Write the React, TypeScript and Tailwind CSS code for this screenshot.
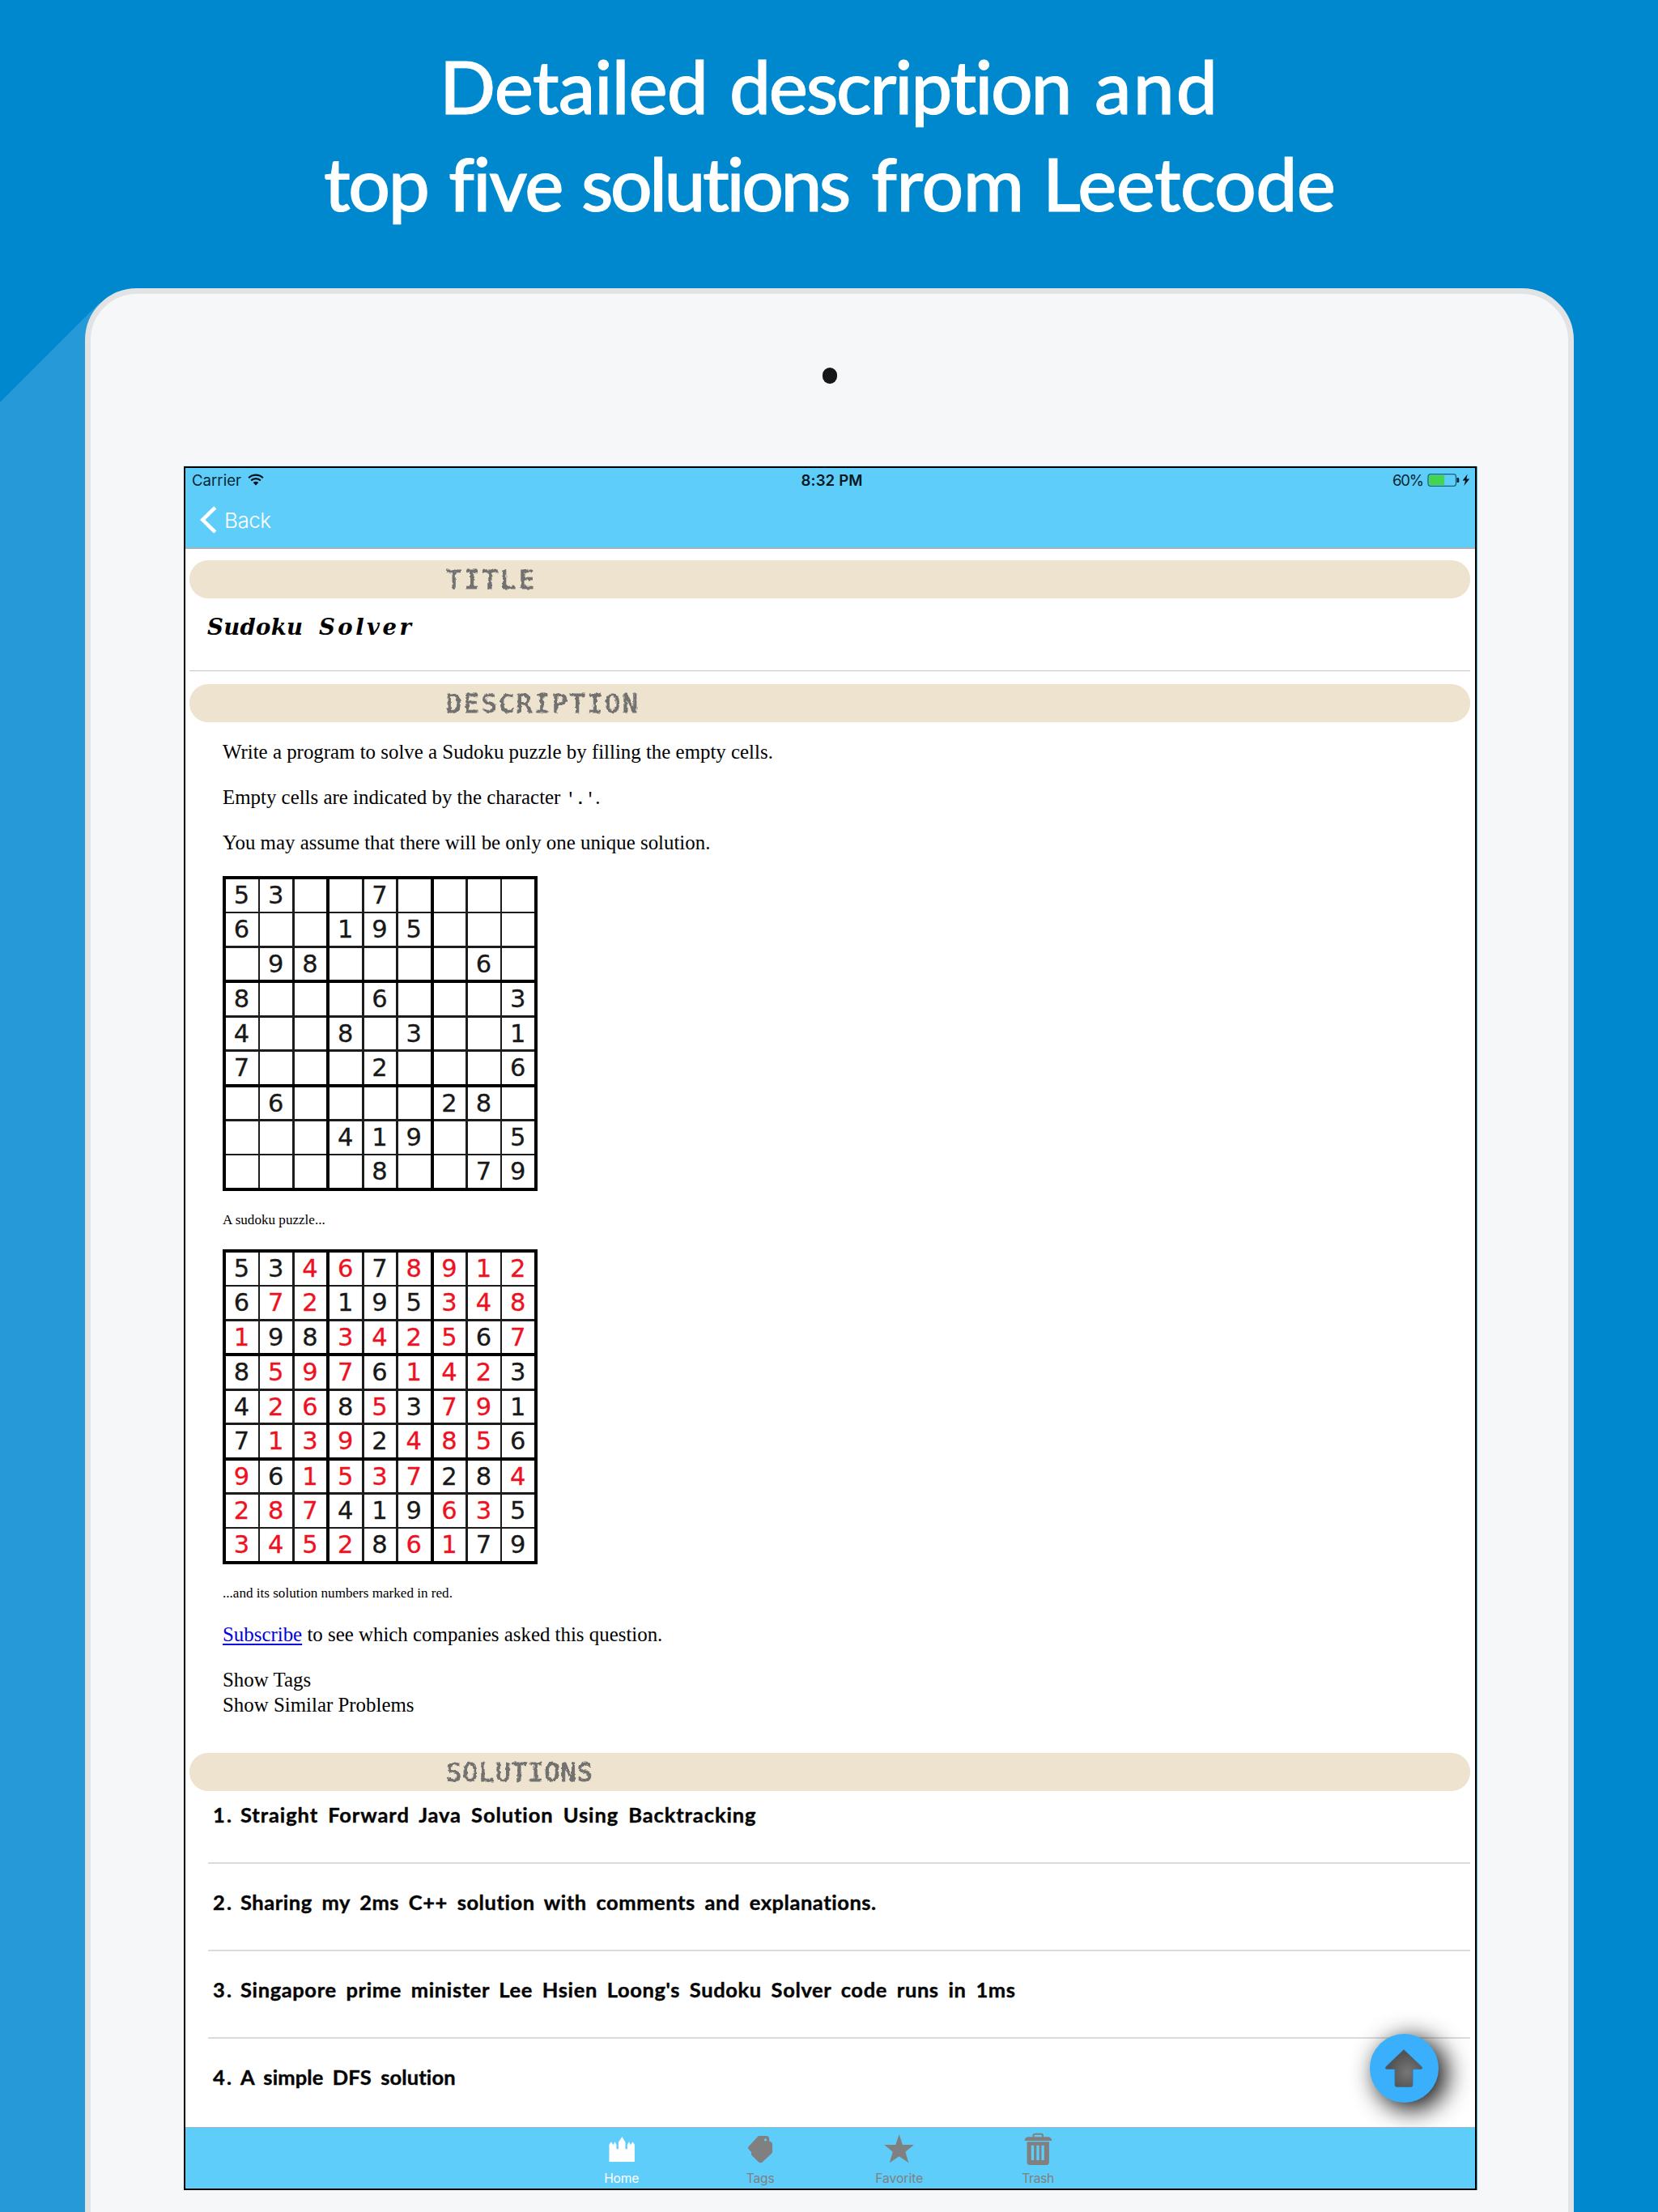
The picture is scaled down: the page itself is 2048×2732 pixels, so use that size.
import { useLayoutEffect, useRef, useState } from 'react';
import type { ReactNode } from 'react';

/* Text tracked so that it fills a given width. */
function Fit({ width, className = '', children }: { width: number; className?: string; children: string }) {
  const ref = useRef<HTMLSpanElement>(null);
  const [spacing, setSpacing] = useState(0);
  useLayoutEffect(() => {
    const el = ref.current;
    if (!el) return;
    const natural = el.getBoundingClientRect().width - spacing * children.length;
    setSpacing((width - natural) / Math.max(1, children.length - 1));
  }, [width, children]);
  return (
    <span className={`block shrink-0 whitespace-nowrap ${className}`} style={{ width }}>
      <span ref={ref} className="inline-block" style={{ letterSpacing: spacing }}>
        {children}
      </span>
    </span>
  );
}

const puzzle = [
  '53..7....',
  '6..195...',
  '.98....6.',
  '8...6...3',
  '4..8.3..1',
  '7...2...6',
  '.6....28.',
  '...419..5',
  '....8..79',
];

const solved = [
  '534678912',
  '672195348',
  '198342567',
  '859761423',
  '426853791',
  '713924856',
  '961537284',
  '287419635',
  '345286179',
];

const three = [0, 1, 2];

function Sudoku({ rows }: { rows: string[] }) {
  return (
    <div className="grid h-[389px] w-[389px] grid-cols-3 grid-rows-3 gap-1 bg-black p-1">
      {three.map((br) =>
        three.map((bc) => (
          <div key={`${br}${bc}`} className="grid grid-cols-3 grid-rows-3 gap-[2.6px] bg-[#1c1c1c]">
            {three.map((r) =>
              three.map((c) => {
                const row = br * 3 + r;
                const col = bc * 3 + c;
                const value = rows[row][col];
                const given = puzzle[row][col] !== '.';
                return (
                  <div
                    key={`${r}${c}`}
                    className={`flex items-center justify-center overflow-hidden bg-white pt-[1px] pr-[1px] font-['DejaVu_Sans'] text-[30.5px] leading-none [-webkit-text-stroke:0.3px_currentColor] ${
                      given ? 'text-[#181818]' : 'text-[#ee1122]'
                    }`}
                  >
                    {value === '.' ? '' : value}
                  </div>
                );
              }),
            )}
          </div>
        )),
      )}
    </div>
  );
}

function SectionBar({ label, width }: { label: string; width: number }) {
  return (
    <div className="mr-[6px] ml-[5px] flex h-[47px] shrink-0 items-center rounded-[23px] bg-[#ede3cf] pl-[317px]">
      <Fit
        width={width}
        className="pt-[2px] font-['DejaVu_Sans_Mono',monospace] text-[32px] leading-[45px] text-[#72716f] [filter:url(#chalk)] [-webkit-text-stroke:1px_currentColor]"
      >
        {label}
      </Fit>
    </div>
  );
}

const solutions = [
  { n: '1.', text: 'Straight Forward Java Solution Using Backtracking', w: 637 },
  { n: '2.', text: 'Sharing my 2ms C++ solution with comments and explanations.', w: 786 },
  { n: '3.', text: "Singapore prime minister Lee Hsien Loong's Sudoku Solver code runs in 1ms", w: 957 },
  { n: '4.', text: 'A simple DFS solution', w: 266 },
];

function Tab({ label, width, color, viewBox, children }: { label: string; width: number; color: string; viewBox: string; children: ReactNode }) {
  return (
    <div className={`flex w-[171.5px] flex-col items-center pt-[6px] ${color}`}>
      <svg className="h-10 w-10" viewBox={viewBox} preserveAspectRatio="none" fill="currentColor">
        {children}
      </svg>
      <Fit width={width} className="mt-[7px] text-[15.6px] leading-5">
        {label}
      </Fit>
    </div>
  );
}

export default function App() {
  return (
    <div className="relative flex h-[2732px] w-[2048px] flex-col overflow-hidden bg-[#0088ce]">
      <svg className="absolute h-0 w-0">
        <filter id="chalk">
          <feTurbulence type="fractalNoise" baseFrequency="0.22" numOctaves="2" seed="4" />
          <feDisplacementMap in="SourceGraphic" scale="4" xChannelSelector="R" yChannelSelector="G" />
        </filter>
      </svg>
      <div className="absolute top-[374px] left-0 h-[2358px] w-[123px] bg-[#269ad8] [clip-path:polygon(0_123px,123px_0,123px_100%,0_100%)]" />

      <h1 className="h-[356px] shrink-0 pt-[46px] font-['Lato',sans-serif] text-[91px] leading-[120px] font-medium text-white [-webkit-text-stroke:1px_white]">
        <span className="flex gap-[26px] pl-[543px]">
          <Fit width={332}>Detailed</Fit>
          <Fit width={425}>description</Fit>
          <Fit width={152}>and</Fit>
        </span>
        <span className="flex gap-[23px] pl-[400px]">
          <Fit width={131}>top</Fit>
          <Fit width={141}>five</Fit>
          <Fit width={335}>solutions</Fit>
          <Fit width={189}>from</Fit>
          <Fit width={362}>Leetcode</Fit>
        </span>
      </h1>

      <div className="relative ml-[105px] flex h-[2500px] w-[1839px] shrink-0 flex-col rounded-[64px] border-[7px] border-[#e1e3e5] bg-[#f5f7f9]">
        <div className="mt-[91px] ml-[904px] h-5 w-[18px] rounded-full bg-[#17171b]" />

        <div className="relative mt-[102px] ml-[115px] flex h-[2129px] w-[1597px] flex-col overflow-hidden border-2 border-black bg-white font-['Inter',sans-serif] shadow-[1px_0_0_#4aa6dc,0_-1px_0_#bfe8f0]">
          <div className="h-[100px] shrink-0 border-b-2 border-[#a3b4bb] bg-[#5fcdfa]">
            <div className="grid h-[30px] grid-cols-3 items-center text-[18.6px] leading-[30px] text-[#062733]">
              <div className="flex items-center gap-2 pl-[8px]">
                <Fit width={61}>Carrier</Fit>
                <svg className="-mt-[2px] h-[15px] w-5" viewBox="0 0 20 15" fill="none" stroke="#04121a" strokeWidth="2.3">
                  <path d="M1.2 5.2 A12.6 12.6 0 0 1 18.8 5.2" />
                  <path d="M4.2 8.4 A8.3 8.3 0 0 1 15.8 8.4" />
                  <path d="M6.7 11 A4.7 4.7 0 0 1 13.3 11 L10 14.6 Z" fill="#04121a" stroke="none" />
                </svg>
              </div>
              <div className="flex justify-center pl-[4px] font-semibold text-[#031820]">
                <Fit width={76}>8:32 PM</Fit>
              </div>
              <div className="flex items-center justify-end pr-[6px]">
                <Fit width={39}>60%</Fit>
                <svg className="ml-[4px] h-4 w-[53px]" viewBox="0 0 53 16">
                  <rect x="1" y=".7" width="34.5" height="14.6" rx="3" fill="none" stroke="#1b6478" strokeWidth="1.3" />
                  <rect x="2.2" y="1.8" width="19" height="12.4" rx="1.4" fill="#43d551" />
                  <path d="M36.5 5 h1.2 q1.6 0 1.6 1.6 v2.8 q0 1.6 -1.6 1.6 h-1.2z" fill="#04222c" />
                  <path d="M49.6 .8 L43.6 8.6 H47 L45.4 15 L52.2 6.6 H48.4Z" fill="#04121a" />
                </svg>
              </div>
            </div>
            <div className="flex h-[68px] items-center pl-[18px] text-white">
              <svg className="h-[34px] w-[22px]" viewBox="0 0 22 34" fill="none" stroke="white" strokeWidth="4.6">
                <path d="M18.8 1.8 L3.2 17 L18.8 32.2" />
              </svg>
              <Fit width={58} className="ml-[8px] pt-[2px] text-[26px] leading-[66px] font-light">
                Back
              </Fit>
            </div>
          </div>

          <div className="flex h-[1949px] shrink-0 flex-col overflow-hidden pt-[14px]">
            <SectionBar label="TITLE" width={109} />
            <h2 className="mb-[2px] flex h-[71px] shrink-0 items-center gap-[20px] pl-[27px] font-['DejaVu_Serif',serif] text-[27.5px] leading-none font-bold text-black italic">
              <Fit width={118}>Sudoku</Fit>
              <Fit width={114}>Solver</Fit>
            </h2>
            <div className="mt-4 mr-[6px] mb-4 ml-[5px] h-px shrink-0 bg-[#c6c6c6]" />
            <SectionBar label="DESCRIPTION" width={237} />

            <div className="flex shrink-0 flex-col pt-[21px] pl-[46px] font-['Liberation_Serif',serif] text-[24.9px] leading-[31px] text-black">
              <p className="mb-[25px]">Write a program to solve a Sudoku puzzle by filling the empty cells.</p>
              <p className="mb-[25px] h-[31px]">
                Empty cells are indicated by the character{' '}
                <code className="font-['Liberation_Mono',monospace] text-[20.3px]">
                  '<b>.</b>'
                </code>
                .
              </p>
              <p className="mb-[26px]">You may assume that there will be only one unique solution.</p>
              <Sudoku rows={puzzle} />
              <p className="mt-[26px] mb-[26px] text-[17.1px] leading-5">A sudoku puzzle...</p>
              <Sudoku rows={solved} />
              <p className="mt-[26px] mb-[25px] text-[17.1px] leading-5">...and its solution numbers marked in red.</p>
              <p className="mb-[25px]">
                <a className="text-[#0000e6] underline decoration-[1.5px] underline-offset-[3px]">Subscribe</a> to see which companies asked this
                question.
              </p>
              <p>Show Tags</p>
              <p className="mb-[44px]">Show Similar Problems</p>
            </div>

            <SectionBar label="SOLUTIONS" width={181} />
            <ol className="mt-[14px] mr-[6px] ml-[28px]">
              {solutions.map((s, i) => (
                <li key={s.n} className="h-[108px]">
                  <div className="flex h-[30px] items-center pl-[6px] font-['Lato',sans-serif] text-[25.5px] leading-[30px] font-bold [word-spacing:5px] text-[#050505] [-webkit-text-stroke:0.4px_currentColor]">
                    <Fit width={23}>{s.n}</Fit>
                    <Fit width={s.w} className="ml-[11px]">
                      {s.text}
                    </Fit>
                  </div>
                  {i < solutions.length - 1 && <div className="mt-[44px] h-[2px] bg-[#dadcdc]" />}
                </li>
              ))}
            </ol>
          </div>

          <div className="absolute top-[1934px] left-[1462.5px] flex h-[85px] w-[85px] items-center justify-center rounded-full bg-[#3ab0fc] shadow-[9px_7px_30px_2px_rgba(0,0,0,0.9)]">
            <svg className="-mt-[2px] h-12 w-12" viewBox="0 0 48 48">
              <defs>
                <radialGradient id="arrow-shade" cx="0.6" cy="0.6" r="0.5">
                  <stop offset="0" stopColor="#777" />
                  <stop offset="1" stopColor="#535353" />
                </radialGradient>
              </defs>
              <path
                d="M24 1.5 L46 22.5 Q48 25 45 25.5 H35 V45 Q35 47.5 32.5 47.5 H15.5 Q13 47.5 13 45 V25.5 H3 Q0 25 2 22.5Z"
                fill="url(#arrow-shade)"
                stroke="#3a7099"
                strokeWidth="0.8"
                strokeLinejoin="round"
              />
            </svg>
          </div>

          <div className="relative flex h-[76px] shrink-0 border-t border-[#9db9c4] bg-[#5fcdfa] pl-[453px]">
            <Tab label="Home" width={43} color="text-white" viewBox="116 72 98 120">
              <path d="M127 180 V116 L133 106 L139 118 L144 106 L149 116 V133 H155 V108 L166 87 L176 108 V133 H182 V116 L187 106 L192 118 L198 106 L204 116 V180Z" />
            </Tab>
            <Tab label="Tags" width={35} color="text-[#808080]" viewBox="538 72 98 120">
              <path
                fillRule="evenodd"
                d="M584 84 H607 Q613 85 614 92 L615 104 Q624 107 624 114 V143 Q624 147 621 150 L594 181 Q588 187 582 181 L562 157 Q559 153 560 144 L551 132 Q549 128 552 123 L579 88 Q581 84 584 84Z M603 94 a4 5 0 1 0 .1 0Z"
              />
            </Tab>
            <Tab label="Favorite" width={59} color="text-[#808080]" viewBox="957 72 98 120">
              <path d="M1005 78 L1015.5 117 H1050 L1024 143 L1034 184 L1005 160 L976 184 L986 143 L960 117 H994.5Z" />
            </Tab>
            <Tab label="Trash" width={40} color="text-[#808080]" viewBox="1377 72 98 120">
              <path
                fillRule="evenodd"
                d="M1410 88 V80 Q1411 74 1417 74 H1436 Q1442 74 1443 80 V88 H1459 Q1468 91 1468 102 H1386 Q1386 91 1395 88Z M1415 88 H1438 V82 Q1438 80 1436 80 H1417 Q1415 80 1415 82Z"
              />
              <path
                fillRule="evenodd"
                d="M1393 106 H1460 V182 Q1459 192 1451 192 H1402 Q1394 192 1393 182Z M1406 119 V174 H1414 V119Z M1422 119 V174 H1430 V119Z M1437 119 V174 H1445 V119Z"
              />
            </Tab>
          </div>
        </div>
      </div>
    </div>
  );
}
